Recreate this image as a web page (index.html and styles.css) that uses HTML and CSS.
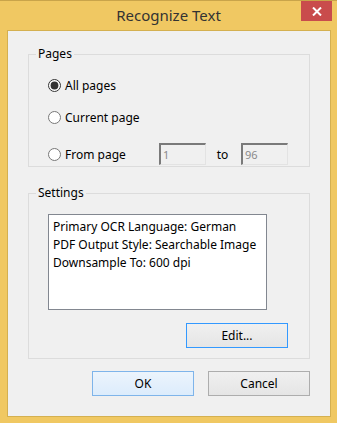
FILE: index.html
```html
<!DOCTYPE html>
<html lang="en">

<head>
    <meta charset="UTF-8">
    <meta name="viewport" content="width=device-width, initial-scale=1.0">
    <title>Recognize Text</title>
    <link rel="stylesheet" href="styles.css">
</head>

<body>
    <div class="window">
        <div class="titlebar">
            <span class="title">Recognize Text</span>
            <button class="close" aria-label="Close">
                <svg width="10" height="9" viewBox="0 0 10 9">
                    <path d="M1 0.5 L9 8.5 M9 0.5 L1 8.5" stroke="#fff" stroke-width="2" />
                </svg>
            </button>
        </div>

        <div class="client">
            <fieldset class="group pages">
                <legend>Pages</legend>
                <label class="radio-row">
                    <input type="radio" name="range" checked>
                    <span>All pages</span>
                </label>
                <label class="radio-row">
                    <input type="radio" name="range">
                    <span>Current page</span>
                </label>
                <div class="radio-row from-row">
                    <label class="from-label">
                        <input type="radio" name="range">
                        <span>From page</span>
                    </label>
                    <input type="text" class="page-field" value="1" disabled>
                    <span class="to">to</span>
                    <input type="text" class="page-field" value="96" disabled>
                </div>
            </fieldset>

            <fieldset class="group settings">
                <legend>Settings</legend>
                <div class="listbox">
                    <div>Primary OCR Language: German</div>
                    <div>PDF Output Style: Searchable Image</div>
                    <div>Downsample To: 600 dpi</div>
                </div>
                <div class="edit-row">
                    <button class="btn btn-focus">Edit...</button>
                </div>
            </fieldset>

            <div class="actions">
                <button class="btn btn-default">OK</button>
                <button class="btn">Cancel</button>
            </div>
        </div>
    </div>
</body>

</html>
```

FILE: styles.css
```css
body {
    margin: 0;
    font-family: "Noto Sans", "Open Sans", sans-serif;
    font-size: 12px;
    color: #000;
}

.window {
    width: 337px;
    height: 423px;
    box-sizing: border-box;
    background-color: #f0c862;
    border-top: 1px solid #c9a44a;
    display: flex;
    flex-direction: column;
}

.titlebar {
    height: 29px;
    position: relative;
    display: flex;
    justify-content: center;
    align-items: center;
}

.title {
    font-size: 15px;
    color: #333;
    margin-top: -2px;
}

.close {
    position: absolute;
    top: 0;
    right: 5px;
    width: 31px;
    height: 20px;
    border: none;
    padding: 0;
    background-color: #c94c4c;
    display: flex;
    justify-content: center;
    align-items: center;
}

.client {
    margin: 0 6px 6px 7px;
    flex: 1;
    background-color: #f0f0f0;
    border: 1px solid #d4b050;
    padding: 16px 20px 0 20px;
    display: flex;
    flex-direction: column;
}

.group {
    margin: 0;
    border: 1px solid #dcdcdc;
    padding: 0 0 0 19px;
}

.group legend {
    padding: 0 2px;
    margin-left: -12px;
    line-height: 14px;
}

.pages {
    height: 110px;
    padding-top: 8px;
}

.radio-row {
    display: flex;
    align-items: center;
    height: 32px;
}

.from-row {
    height: 42px;
}

.from-label {
    display: flex;
    align-items: center;
    width: 111px;
}

.radio-row input[type="radio"] {
    width: 13px;
    height: 13px;
    margin: 0 4px 0 0;
    accent-color: #333;
}

.page-field {
    width: 47px;
    height: 22px;
    box-sizing: border-box;
    border: 1px solid #e3e3e3;
    border-top: 2px solid #7a7a7a;
    border-left: 2px solid #7a7a7a;
    background-color: #f0f0f0;
    font: inherit;
    font-size: 11px;
    color: #8a8a8a;
    padding: 0 2px;
}

.to {
    width: 37px;
    text-align: center;
    margin-left: -2px;
}

.settings {
    margin-top: 19px;
    height: 157px;
    padding-top: 14px;
}

.listbox {
    width: 219px;
    height: 96px;
    box-sizing: border-box;
    border: 1px solid #828790;
    background-color: #fff;
    padding: 3px 4px;
    line-height: 18px;
}

.edit-row {
    display: flex;
    justify-content: flex-end;
    width: 240px;
    margin-top: 13px;
}

.btn {
    width: 102px;
    height: 25px;
    box-sizing: border-box;
    border: 1px solid #adadad;
    background: linear-gradient(#f0f0f0, #e5e5e5);
    font: inherit;
    color: #000;
    padding: 0;
}

.btn-focus {
    border-color: #3399ff;
}

.btn-default {
    border-color: #7eb4ea;
    background: linear-gradient(#ecf4fc, #dcecfc);
}

.actions {
    display: flex;
    justify-content: flex-end;
    gap: 14px;
    margin-top: 12px;
}
```
